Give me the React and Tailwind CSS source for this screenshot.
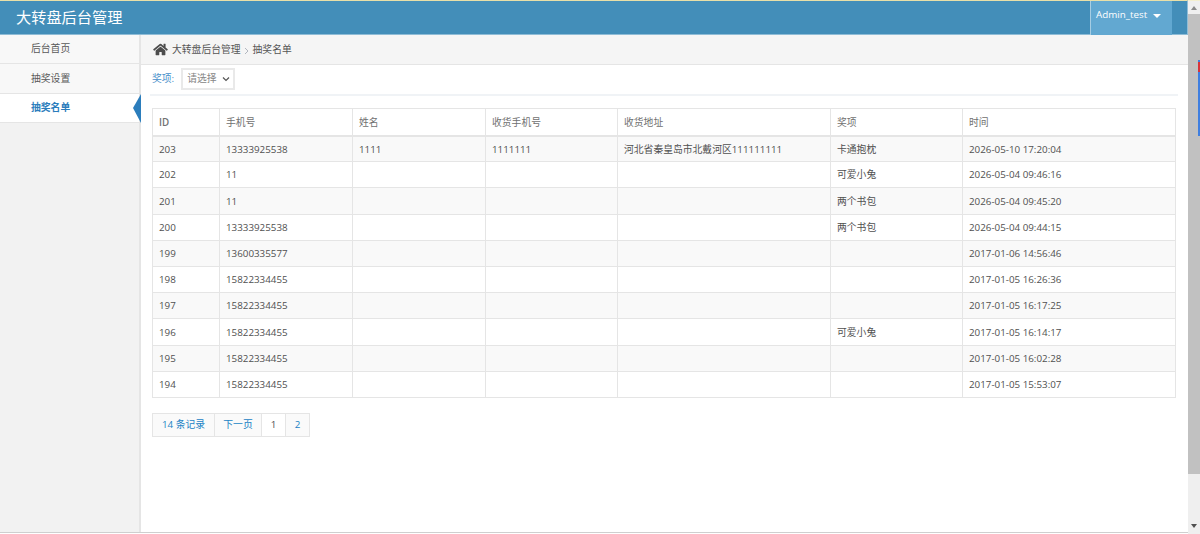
import React from "react";

const rows = [
  ["203", "13333925538", "1111", "1111111", "河北省秦皇岛市北戴河区111111111", "卡通抱枕", "2026-05-10 17:20:04"],
  ["202", "11", "", "", "", "可爱小兔", "2026-05-04 09:46:16"],
  ["201", "11", "", "", "", "两个书包", "2026-05-04 09:45:20"],
  ["200", "13333925538", "", "", "", "两个书包", "2026-05-04 09:44:15"],
  ["199", "13600335577", "", "", "", "", "2017-01-06 14:56:46"],
  ["198", "15822334455", "", "", "", "", "2017-01-05 16:26:36"],
  ["197", "15822334455", "", "", "", "", "2017-01-05 16:17:25"],
  ["196", "15822334455", "", "", "", "可爱小兔", "2017-01-05 16:14:17"],
  ["195", "15822334455", "", "", "", "", "2017-01-05 16:02:28"],
  ["194", "15822334455", "", "", "", "", "2017-01-05 15:53:07"],
];
const heads = ["ID", "手机号", "姓名", "收货手机号", "收货地址", "奖项", "时间"];
const widths = ["w-[67px]", "w-[133px]", "w-[133px]", "w-[132px]", "w-[213px]", "w-[132px]", "w-[213px]"];

export default function App() {
  return (
    <div className="w-[1200px] h-[534px] overflow-hidden flex bg-white text-[9.8px] text-[#505050] font-['Open_Sans','Noto_Sans_CJK_SC',sans-serif]">
      <div className="w-[1188px] flex flex-col h-[533px]">
        <header className="h-[35px] shrink-0 bg-[#438eb9] border-t border-t-[#e8dfa8] border-b border-b-[#8fbcd6] border-r border-r-[#8fbcd6] flex justify-between items-stretch">
          <div className="pl-4 text-white text-[15.2px] leading-[33px]">大转盘后台管理</div>
          <div className="flex mr-[15px] h-[33px]">
            <div className="w-[82px] bg-[#62a8d1] border-l border-l-[#a6cde3] text-white pl-[5px] pt-[6px] flex items-start gap-[6px] h-[34px]">
              <span className="text-[9.8px] leading-[15px]">Admin_test</span>
              <span className="mt-[7px] w-0 h-0 border-x-[4px] border-x-transparent border-t-[4px] border-t-white"></span>
            </div>
          </div>
        </header>
        <div className="flex flex-1 min-h-0">
          <aside className="w-[141px] shrink-0 bg-[#f2f2f2] border-r-2 border-r-[#e5e5e5]">
            <div className="h-[29px] pl-[31px] leading-[27px] bg-[#f8f8f8] border-b border-b-[#e5e5e5] text-[#585858]">后台首页</div>
            <div className="h-[30px] pl-[31px] leading-[29px] bg-[#f8f8f8] border-b border-b-[#e5e5e5] text-[#585858]">抽奖设置</div>
            <div className="relative h-[29px] pl-[31px] leading-[27px] bg-white border-b border-b-[#e5e5e5] text-[#2b7dbc] font-semibold">
              抽奖名单
              <svg className="absolute right-[-2px] top-0" width="8" height="29" viewBox="0 0 8 29"><path d="M8 0 L0 14 L8 29 Z" fill="#2b7dbc" /></svg>
            </div>
          </aside>
          <main className="flex-1 min-w-0">
            <div className="h-[30px] bg-[#f5f5f5] border-b border-b-[#e5e5e5] flex items-center pl-[12px] text-[#555]">
              <svg width="15" height="13" viewBox="0 0 576 512" className="mr-[4px]" fill="#4c4c4c"><path d="M280 148 96 300v164a16 16 0 0 0 16 16l112-.3a16 16 0 0 0 16-16V368a16 16 0 0 1 16-16h64a16 16 0 0 1 16 16v96a16 16 0 0 0 16 16l112 .3a16 16 0 0 0 16-16V300L296 148a12 12 0 0 0-16 0zM572 251l-84-69V44a12 12 0 0 0-12-12h-56a12 12 0 0 0-12 12v72l-89-74a48 48 0 0 0-61 0L4 251a12 12 0 0 0-2 17l26 31a12 12 0 0 0 17 2L280 107a12 12 0 0 1 16 0l235 194a12 12 0 0 0 17-2l26-31a12 12 0 0 0-2-17z" /></svg>
              <span className="pt-[1px]">大转盘后台管理</span>
              <svg width="6" height="8" viewBox="0 0 6 8" className="mx-[3px] mt-[2px]"><path d="M1 1l3 3-3 3" fill="none" stroke="#b2b6bf" strokeWidth="1" /></svg>
              <span className="pt-[1px]">抽奖名单</span>
            </div>
            <div className="ml-[9px] mr-[10px] pl-[2px] h-[31px] border-b-2 border-b-[#f0f3f6] flex items-center gap-[7px] pb-[1px]">
              <span className="text-[#478fca]">奖项:</span>
              <div className="w-[54px] h-[22px] border-2 border-[#e9e9e9] flex items-center justify-between pl-[4px] pr-[3px] text-[#858585]">
                <span>请选择</span>
                <svg width="8" height="6" viewBox="0 0 8 6"><path d="M1 1.5l3 3 3-3" fill="none" stroke="#555" strokeWidth="1.2" /></svg>
              </div>
            </div>
            <div className="ml-[11px] mt-[12px] w-[1024px]">
              <table className="w-[1024px] table-fixed border-collapse">
                <thead>
                  <tr className="h-[27px]">
                    {heads.map((h, i) => (
                      <th key={i} className={`${widths[i]} border border-[#e5e5e5] border-b-2 text-left px-[6px] pt-[3px] pb-0 text-[#707070] ${i === 0 ? "font-semibold" : "font-normal"}`}>{h}</th>
                    ))}
                  </tr>
                </thead>
                <tbody>
                  {rows.map((r, ri) => (
                    <tr key={ri} className={`h-[26.2px] ${ri % 2 === 0 ? "bg-[#f9f9f9]" : "bg-white"}`}>
                      {r.map((c, ci) => (
                        <td key={ci} className="border border-[#e5e5e5] px-[6px] pt-[2px] pb-0 whitespace-nowrap">{c}</td>
                      ))}
                    </tr>
                  ))}
                </tbody>
              </table>
              <div className="mt-[15px] flex h-[24px] text-[#2283c5]">
                <div className="w-[63px] bg-[#fafafa] border border-[#e5e5e5] flex items-center justify-center">14 条记录</div>
                <div className="w-[48px] -ml-px bg-[#fafafa] border border-[#e5e5e5] flex items-center justify-center">下一页</div>
                <div className="w-[25px] -ml-px bg-white border border-[#e5e5e5] flex items-center justify-center text-[#505050]">1</div>
                <div className="w-[25px] -ml-px bg-[#fafafa] border border-[#e5e5e5] flex items-center justify-center">2</div>
              </div>
            </div>
          </main>
        </div>
        <div className="h-px bg-[#cfcfcf] shrink-0"></div>
      </div>
      <div className="relative w-[12px] h-[534px] bg-[#efefef] border-t border-t-[#f4efcf] flex flex-col items-center">
        <div className="h-[13px] w-full flex items-center justify-center">
          <span className="w-0 h-0 border-x-[3px] border-x-transparent border-b-[4px] border-b-[#8a8a8a]"></span>
        </div>
        <div className="w-full h-[460px] bg-[#c1c1c1]"></div>
        <div className="flex-1"></div>
        <div className="h-[14px] w-full flex items-center justify-center mb-[1px]">
          <span className="w-0 h-0 border-x-[3px] border-x-transparent border-t-[4px] border-t-[#505050]"></span>
        </div>
        <div className="absolute right-0 top-[59px] w-[2px] h-[76px] bg-[#3f7fe0]"></div>
        <div className="absolute right-0 top-[61px] w-[2px] h-[10px] bg-[#d8343a]"></div>
      </div>
    </div>
  );
}
